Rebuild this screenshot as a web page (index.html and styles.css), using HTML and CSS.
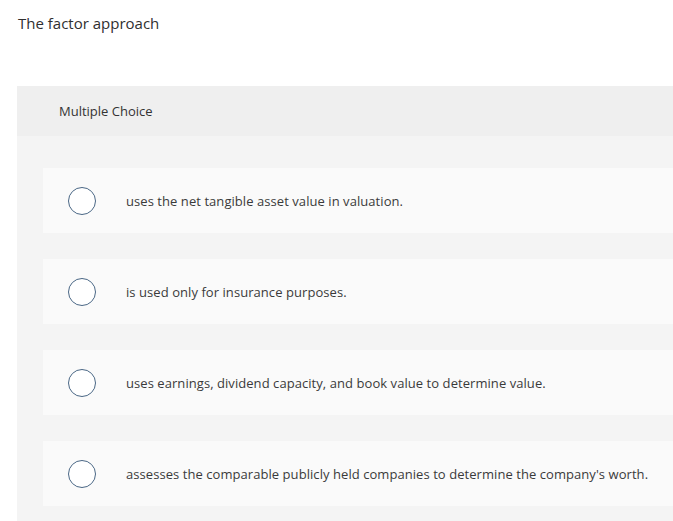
FILE: index.html
```html
<!DOCTYPE html>
<html>
<head>
<meta charset="utf-8">
<link rel="stylesheet" href="styles.css">
</head>
<body>
<div class="question">The factor approach</div>
<div class="panel">
  <div class="panel-head">Multiple Choice</div>
  <div class="panel-body">
    <div class="option"><span class="radio"></span><span class="label">uses the net tangible asset value in valuation.</span></div>
    <div class="option"><span class="radio"></span><span class="label">is used only for insurance purposes.</span></div>
    <div class="option"><span class="radio"></span><span class="label">uses earnings, dividend capacity, and book value to determine value.</span></div>
    <div class="option"><span class="radio"></span><span class="label">assesses the comparable publicly held companies to determine the company's worth.</span></div>
  </div>
</div>
</body>
</html>
```
FILE: styles.css
```css
html, body {
  margin: 0;
  padding: 0;
  background: #ffffff;
  font-family: "Open Sans", "Liberation Sans", sans-serif;
  color: #333333;
  overflow: hidden;
}
.question {
  padding: 13px 0 0 18px;
  font-size: 15px;
  line-height: 20px;
  height: 86px;
  box-sizing: border-box;
  color: #2f2f2f;
}
.panel {
  margin-left: 17px;
  background: #f4f4f4;
}
.panel-head {
  background: #efefef;
  height: 50px;
  display: flex;
  align-items: center;
  padding-left: 42px;
  font-size: 13px;
  color: #333;
}
.panel-body {
  padding: 32px 0 20px 26px;
  display: flex;
  flex-direction: column;
  gap: 26px;
}
.option {
  background: #fafafa;
  height: 65px;
  display: flex;
  align-items: center;
}
.radio {
  width: 26px;
  height: 26px;
  border: 1.5px solid #4a6785;
  border-radius: 50%;
  margin-left: 25px;
  flex: none;
  background: #fff;
}
.label {
  margin-left: 30px;
  font-size: 13px;
  letter-spacing: 0.06px;
  color: #3a3a3a;
}
```
